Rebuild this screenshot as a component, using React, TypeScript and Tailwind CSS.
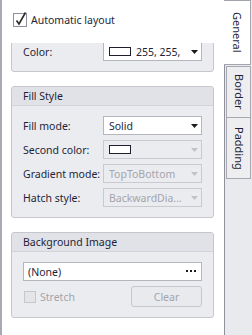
import React from "react";

const Arrow = ({ disabled }: { disabled?: boolean }) => (
  <svg width="7" height="4" viewBox="0 0 7 4" className="shrink-0">
    <path d="M0 0H7L3.5 4Z" fill={disabled ? "#c2c3c9" : "#1a1a1a"} />
  </svg>
);

const Swatch = () => (
  <span className="inline-block w-[22px] h-[9px] border border-[#1e1e2e] bg-white shrink-0" />
);

function Row({ label, children }: { label: string; children: React.ReactNode }) {
  return (
    <div className="flex items-center h-[19px]">
      <div className="w-[80px] shrink-0 whitespace-nowrap">{label}</div>
      <div className="w-[99px]">{children}</div>
    </div>
  );
}

function Combo({ text, disabled, swatch }: { text?: string; disabled?: boolean; swatch?: boolean }) {
  return (
    <div
      className={
        "h-[19px] flex items-center pl-[5px] pr-[3px] border " +
        (disabled ? "bg-[#ebecf0] border-[#c9cad0] text-[#a3a4ac]" : "bg-white border-[#b4b5bd]")
      }
    >
      {swatch && <Swatch />}
      <span className={"flex-1 whitespace-nowrap overflow-hidden " + (swatch ? "pl-[5px]" : "")}>{text}</span>
      <Arrow disabled={disabled} />
    </div>
  );
}

function Group({ title, children, className = "" }: { title: string; children: React.ReactNode; className?: string }) {
  return (
    <div className={"rounded-[3px] border border-[#c6c7cd] bg-[#ebecf0] " + className}>
      <div className="h-[19px] flex items-center px-[11px] bg-[#e1e2e7] border-b border-[#d3d4d9] rounded-t-[3px]">
        {title}
      </div>
      <div className="px-[11px] pt-[10px] pb-[10px] flex flex-col gap-[5px]">{children}</div>
    </div>
  );
}

export default function App() {
  return (
    <div className="flex w-[252px] h-[335px] overflow-hidden bg-white text-[10.5px] leading-[14px] text-[#1e1f38] [font-family:'Noto_Sans',sans-serif]">
      {/* main panel */}
      <div className="w-[224px] shrink-0 flex flex-col border-l-2 border-[#a8a9b3] bg-white">
        <div className="h-[43px] shrink-0 flex items-start pl-[10px] pt-[11px]">
          <div className="flex items-center gap-[2px]">
            <svg width="17" height="17" viewBox="0 0 17 17" className="shrink-0">
              <rect x="1.5" y="2.5" width="13" height="13" fill="#fff" stroke="#8e8f99" />
              <path d="M4.5 9.5 L7 13 L13.5 1.5" fill="none" stroke="#2a2a2a" strokeWidth="1.6" />
            </svg>
            <span className="whitespace-nowrap">Automatic layout</span>
          </div>
        </div>
        <div className="flex-1 overflow-hidden pl-[9px] pr-[10px]">
          <Group title="" className="-mt-[31px]">
            <Row label="Color:">
              <Combo text="255, 255," swatch />
            </Row>
          </Group>
          <Group title="Fill Style" className="mt-[14px]">
            <Row label="Fill mode:">
              <Combo text="Solid" />
            </Row>
            <Row label="Second color:">
              <Combo disabled swatch />
            </Row>
            <Row label="Gradient mode:">
              <Combo disabled text="TopToBottom" />
            </Row>
            <Row label="Hatch style:">
              <Combo disabled text="BackwardDia..." />
            </Row>
          </Group>
          <Group title="Background Image" className="mt-[14px]">
            <div className="h-[19px] flex items-center pl-[4px] pr-[3px] bg-white border border-[#b4b5bd] w-[179px]">
              <span className="flex-1">(None)</span>
              <svg width="11" height="3" viewBox="0 0 11 3" className="mr-[1px]">
                <rect x="0" y="0" width="2" height="2" fill="#1a1a1a" />
                <rect x="4" y="0" width="2" height="2" fill="#1a1a1a" />
                <rect x="8" y="0" width="2" height="2" fill="#1a1a1a" />
              </svg>
            </div>
            <div className="flex items-center h-[21px] w-[179px]">
              <div className="flex items-center gap-[4px] pl-[1px] text-[#a3a4ac]">
                <span className="inline-block w-[12px] h-[12px] border border-[#c6c7cd] bg-[#e4e5e9]" />
                <span>Stretch</span>
              </div>
              <div className="ml-auto w-[71px] h-[21px] rounded-[3px] border border-[#c6c7cd] bg-[#e9eaee] flex items-center justify-center text-[#a3a4ac]">
                Clear
              </div>
            </div>
          </Group>
        </div>
      </div>
      {/* tab strip */}
      <div className="flex-1 flex flex-col bg-[#e9eaee]">
        <div className="h-[65px] w-[27px] shrink-0 bg-white border-t border-r border-b border-[#a3a4ad] flex items-center justify-center">
          <span className="[writing-mode:vertical-rl] text-[11px]">General</span>
        </div>
        <div className="flex-1 border-l border-[#8f909a] pl-[1px] pt-[1px] flex flex-col">
          <div className="w-[25px] h-[52px] bg-[#eeeef1] border border-[#a6a7b0] flex items-center justify-center">
            <span className="[writing-mode:vertical-rl] text-[11px]">Border</span>
          </div>
          <div className="w-[25px] h-[62px] -mt-[1px] bg-[#eeeef1] border border-[#a6a7b0] flex items-center justify-center">
            <span className="[writing-mode:vertical-rl] text-[11px]">Padding</span>
          </div>
        </div>
      </div>
    </div>
  );
}
